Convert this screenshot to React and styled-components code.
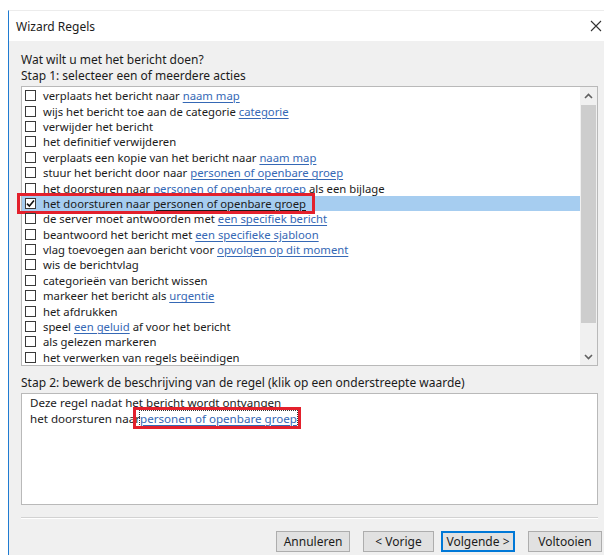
import React from "react";
import styled, { createGlobalStyle } from "styled-components";

const GlobalStyle = createGlobalStyle`
  html, body {
    margin: 0;
    padding: 0;
    background: #ffffff;
    overflow: hidden;
  }
  body {
    font-family: "Noto Sans", "Open Sans", sans-serif;
    font-size: 12px;
    color: #1b1b1b;
  }
`;

const Window = styled.div`
  margin: 10px 0 0 8px;
  border-left: 1px solid #1f7bd1;
  border-top: 1px solid #ececec;
  height: 545px;
  display: flex;
  flex-direction: column;
`;

const TitleBar = styled.div`
  height: 30px;
  background: #ffffff;
  display: flex;
  align-items: center;
  justify-content: space-between;
  padding: 0 1px 0 7px;
`;

const Title = styled.span`
  font-size: 12px;
  color: #1b1b1b;
`;

const CloseButton = styled.span`
  width: 14px;
  height: 14px;
  display: flex;
  align-items: center;
  justify-content: center;
`;

const Body = styled.div`
  flex: 1;
  background: #f0f0f0;
  padding: 11px 2px 0 12px;
  display: flex;
  flex-direction: column;
`;

const Label = styled.div`
  line-height: 16px;
  height: 16px;
  white-space: nowrap;
  margin-top: ${(p) => p.$top || 0}px;
`;

const ListBox = styled.div`
  margin-top: 2px;
  margin-right: 4px;
  height: 278px;
  background: #ffffff;
  border: 1px solid #b9b9b9;
  display: flex;
`;

const Rows = styled.div`
  flex: 1;
  padding-top: 1px;
  font-size: 11.3px;
`;

const Row = styled.div`
  position: relative;
  height: 15.4px;
  display: flex;
  align-items: center;
  padding-left: 3px;
  white-space: nowrap;
  background: ${(p) => (p.$selected ? "#a6cdf0" : "transparent")};
`;

const Box = styled.span`
  width: 11px;
  height: 11px;
  border: 1px solid #3a3a3a;
  background: #ffffff;
  box-sizing: border-box;
  margin-right: 7px;
  display: flex;
  align-items: center;
  justify-content: center;
  flex: none;
`;

const RowText = styled.span`
  line-height: 15px;
  color: #1b1b1b;
`;

const Link = styled.span`
  color: ${(p) => (p.$strong ? "#1b1b1b" : "#3568b5")};
  text-decoration: underline;
  text-underline-offset: 2px;
`;

// red highlight frame drawn over the chosen action and its value
const Mark = styled.span`
  position: absolute;
  border: 3px solid #e3202c;
  pointer-events: none;
`;

const Scrollbar = styled.div`
  width: 17px;
  background: #f0f0f0;
  display: flex;
  flex-direction: column;
  align-items: center;
`;

const Arrow = styled.div`
  height: 17px;
  width: 17px;
  display: flex;
  align-items: center;
  justify-content: center;
`;

const Thumb = styled.div`
  width: 15px;
  height: 218px;
  margin-top: 1px;
  background: #cdcdcd;
`;

const Spacer = styled.div`
  flex: 1;
`;

const DescBox = styled.div`
  margin-top: 2px;
  margin-right: 4px;
  height: 109px;
  background: #ffffff;
  border: 1px solid #b9b9b9;
  padding: 1px 0 0 8px;
  font-size: 11.6px;
  line-height: 16px;
`;

const DescLine = styled.div`
  white-space: nowrap;
`;

const FocusLink = styled.span`
  position: relative;
  display: inline-block;
  line-height: 15px;
  color: #3568b5;
  text-decoration: underline;
  text-underline-offset: 2px;
  outline: 1px dotted #333;
  outline-offset: 0;
`;

const Separator = styled.div`
  margin-top: 12px;
  margin-right: 4px;
  height: 1px;
  background: #d2d2d2;
  border-bottom: 1px solid #ffffff;
`;

const ButtonRow = styled.div`
  margin-top: 12px;
  display: flex;
  justify-content: flex-end;
`;

const Button = styled.button`
  width: ${(p) => p.$width || 74}px;
  height: 21px;
  margin-left: ${(p) => p.$gap}px;
  font-family: inherit;
  font-size: 12px;
  color: #1b1b1b;
  background: #e1e1e1;
  border: ${(p) => (p.$focus ? "2px solid #0078d7" : "1px solid #adadad")};
  padding: 0;
  box-sizing: border-box;
`;

const Check = () => (
  <svg width="9" height="9" viewBox="0 0 9 9">
    <path d="M1 4.6 L3.4 7 L8 1.6" fill="none" stroke="#111" strokeWidth="1.6" />
  </svg>
);

const actions = [
  ["verplaats het bericht naar ", "naam map"],
  ["wijs het bericht toe aan de categorie ", "categorie"],
  ["verwijder het bericht"],
  ["het definitief verwijderen"],
  ["verplaats een kopie van het bericht naar ", "naam map"],
  ["stuur het bericht door naar ", "personen of openbare groep"],
  ["het doorsturen naar ", "personen of openbare groep", " als een bijlage"],
  ["het doorsturen naar ", "personen of openbare groep"],
  ["de server moet antwoorden met ", "een specifiek bericht"],
  ["beantwoord het bericht met ", "een specifieke sjabloon"],
  ["vlag toevoegen aan bericht voor ", "opvolgen op dit moment"],
  ["wis de berichtvlag"],
  ["categorieën van bericht wissen"],
  ["markeer het bericht als ", "urgentie"],
  ["het afdrukken"],
  ["speel ", "een geluid", " af voor het bericht"],
  ["als gelezen markeren"],
  ["het verwerken van regels beëindigen"],
];

const SELECTED = 7;

export default function App() {
  return (
    <>
      <GlobalStyle />
      <Window>
        <TitleBar>
          <Title>Wizard Regels</Title>
          <CloseButton>
            <svg width="12" height="12" viewBox="0 0 12 12">
              <path d="M1 1 L11 11 M11 1 L1 11" stroke="#333" strokeWidth="1.1" />
            </svg>
          </CloseButton>
        </TitleBar>
        <Body>
          <Label>Wat wilt u met het bericht doen?</Label>
          <Label>Stap 1: selecteer een of meerdere acties</Label>
          <ListBox>
            <Rows>
              {actions.map(([pre, link, post], i) => (
                <Row key={i} $selected={i === SELECTED}>
                  <Box>{i === SELECTED && <Check />}</Box>
                  <RowText>
                    {pre}
                    {link && <Link $strong={i === SELECTED}>{link}</Link>}
                    {post}
                  </RowText>
                  {i === SELECTED && (
                    <Mark style={{ left: -5, top: -3, width: 292, height: 15 }} />
                  )}
                </Row>
              ))}
            </Rows>
            <Scrollbar>
              <Arrow>
                <svg width="9" height="6" viewBox="0 0 9 6">
                  <path d="M1 5 L4.5 1.5 L8 5" fill="none" stroke="#606060" strokeWidth="1.6" />
                </svg>
              </Arrow>
              <Thumb />
              <Spacer />
              <Arrow>
                <svg width="9" height="6" viewBox="0 0 9 6">
                  <path d="M1 1 L4.5 4.5 L8 1" fill="none" stroke="#606060" strokeWidth="1.6" />
                </svg>
              </Arrow>
            </Scrollbar>
          </ListBox>
          <Label $top={9}>
            Stap 2: bewerk de beschrijving van de regel (klik op een onderstreepte waarde)
          </Label>
          <DescBox>
            <DescLine>Deze regel nadat het bericht wordt ontvangen</DescLine>
            <DescLine>
              het doorsturen naar
              <FocusLink>
                personen of openbare groep
                <Mark style={{ left: -7, top: -4, width: 162, height: 16 }} />
              </FocusLink>
            </DescLine>
          </DescBox>
          <Separator />
          <ButtonRow>
            <Button $gap={0}>Annuleren</Button>
            <Button $gap={13} $width={71}>
              &lt; Vorige
            </Button>
            <Button $gap={7} $focus>
              Volgende &gt;
            </Button>
            <Button $gap={13}>Voltooien</Button>
          </ButtonRow>
        </Body>
      </Window>
    </>
  );
}
